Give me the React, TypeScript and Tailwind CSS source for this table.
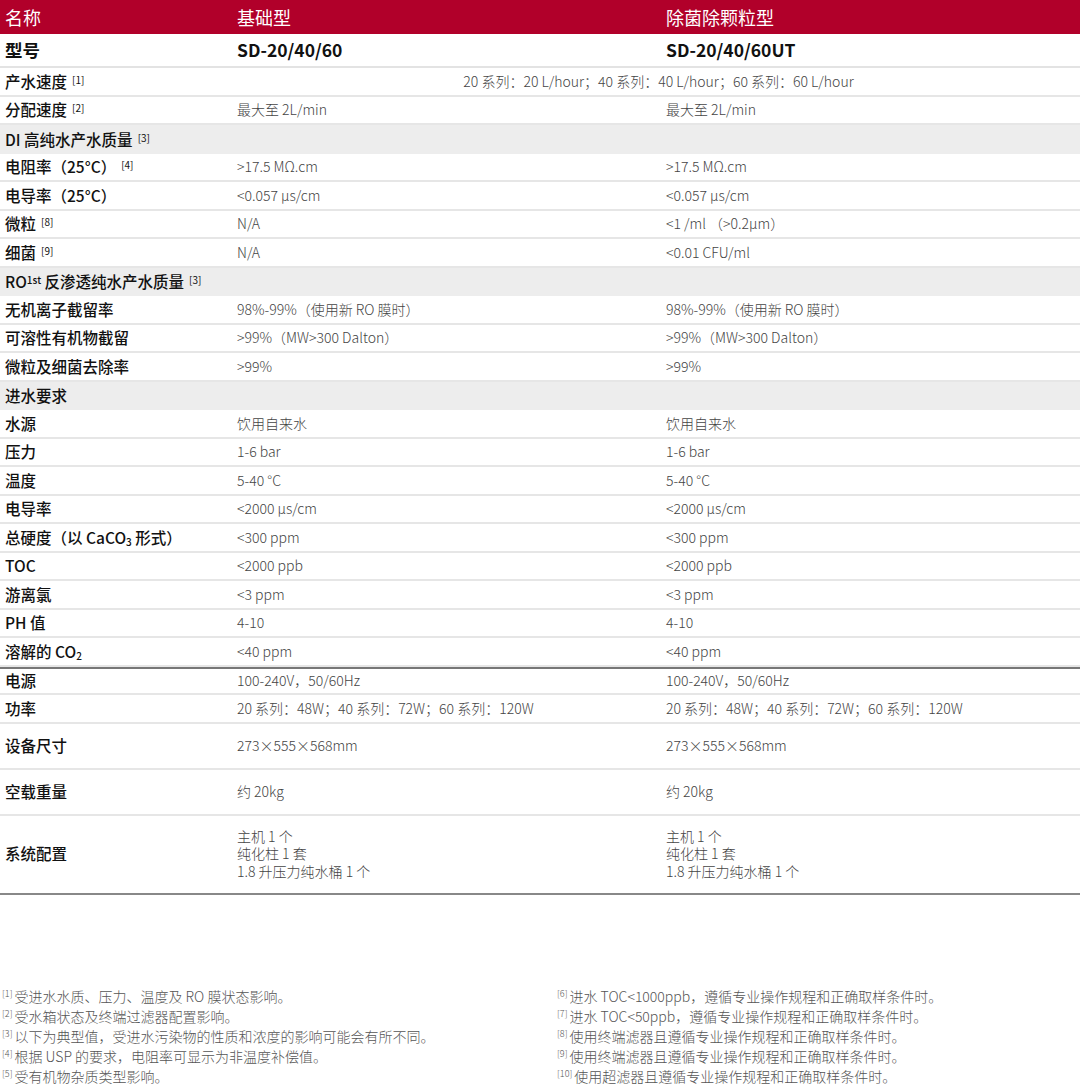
import React from 'react';

type Row = {
  label: React.ReactNode;
  a?: React.ReactNode;
  b?: React.ReactNode;
  span?: React.ReactNode;
  section?: boolean;
  h?: string;
  topDark?: boolean;
};

const Sup = ({ n }: { n: string }) => (
  <sup className="ml-[5px] text-[10px] font-normal relative -top-[4px]">[{n}]</sup>
);

const rows: Row[] = [
  {
    label: <>产水速度<Sup n="1" /></>,
    span: '20 系列：20 L/hour；40 系列：40 L/hour；60 系列：60 L/hour',
  },
  { label: <>分配速度<Sup n="2" /></>, a: '最大至 2L/min', b: '最大至 2L/min' },
  { label: <>DI 高纯水产水质量<Sup n="3" /></>, section: true },
  { label: <>电阻率（25°C）<Sup n="4" /></>, a: '>17.5 MΩ.cm', b: '>17.5 MΩ.cm' },
  { label: '电导率（25°C）', a: '<0.057 µs/cm', b: '<0.057 µs/cm' },
  { label: <>微粒<Sup n="8" /></>, a: 'N/A', b: '<1 /ml （>0.2µm）' },
  { label: <>细菌<Sup n="9" /></>, a: 'N/A', b: '<0.01 CFU/ml' },
  {
    label: (
      <>
        RO<sup className="text-[10px] relative -top-[4px]">1st</sup> 反渗透纯水产水质量<Sup n="3" />
      </>
    ),
    section: true,
  },
  { label: '无机离子截留率', a: '98%-99%（使用新 RO 膜时）', b: '98%-99%（使用新 RO 膜时）' },
  { label: '可溶性有机物截留', a: '>99%（MW>300 Dalton）', b: '>99%（MW>300 Dalton）' },
  { label: '微粒及细菌去除率', a: '>99%', b: '>99%' },
  { label: '进水要求', section: true },
  { label: '水源', a: '饮用自来水', b: '饮用自来水' },
  { label: '压力', a: '1-6 bar', b: '1-6 bar' },
  { label: '温度', a: '5-40 °C', b: '5-40 °C' },
  { label: '电导率', a: '<2000 µs/cm', b: '<2000 µs/cm' },
  {
    label: (
      <>
        总硬度（以 CaCO<sub className="text-[10px]">3</sub> 形式）
      </>
    ),
    a: '<300 ppm',
    b: '<300 ppm',
  },
  { label: 'TOC', a: '<2000 ppb', b: '<2000 ppb' },
  { label: '游离氯', a: '<3 ppm', b: '<3 ppm' },
  { label: 'PH 值', a: '4-10', b: '4-10' },
  {
    label: (
      <>
        溶解的 CO<sub className="text-[10px]">2</sub>
      </>
    ),
    a: '<40 ppm',
    b: '<40 ppm',
  },
  { label: '电源', a: '100-240V，50/60Hz', b: '100-240V，50/60Hz', topDark: true },
  {
    label: '功率',
    a: '20 系列：48W；40 系列：72W；60 系列：120W',
    b: '20 系列：48W；40 系列：72W；60 系列：120W',
  },
  { label: '设备尺寸', a: '273×555×568mm', b: '273×555×568mm', h: 'h-[46px]' },
  { label: '空载重量', a: '约 20kg', b: '约 20kg', h: 'h-[46px]' },
];

const config = (
  <div className="leading-[17.5px]">
    <div>主机 1 个</div>
    <div>纯化柱 1 套</div>
    <div>1.8 升压力纯水桶 1 个</div>
  </div>
);

const notesLeft = [
  ['1', '受进水水质、压力、温度及 RO 膜状态影响。'],
  ['2', '受水箱状态及终端过滤器配置影响。'],
  ['3', '以下为典型值，受进水污染物的性质和浓度的影响可能会有所不同。'],
  ['4', '根据 USP 的要求，电阻率可显示为非温度补偿值。'],
  ['5', '受有机物杂质类型影响。'],
];

const notesRight = [
  ['6', '进水 TOC<1000ppb，遵循专业操作规程和正确取样条件时。'],
  ['7', '进水 TOC<50ppb，遵循专业操作规程和正确取样条件时。'],
  ['8', '使用终端滤器且遵循专业操作规程和正确取样条件时。'],
  ['9', '使用终端滤器且遵循专业操作规程和正确取样条件时。'],
  ['10', '使用超滤器且遵循专业操作规程和正确取样条件时。'],
];

const Notes = ({ items }: { items: string[][] }) => (
  <div className="flex flex-col">
    {items.map(([n, t]) => (
      <div key={n} className="h-[20px] leading-[20px] text-[14px] text-[#555] font-light whitespace-nowrap">
        <span className="text-[9px] relative -top-[5px] mr-[2px]">[{n}]</span>
        {t}
      </div>
    ))}
  </div>
);

export default function App() {
  return (
    <div
      className="w-[1080px] h-[1085px] bg-white overflow-hidden"
      style={{ fontFamily: '"Noto Sans CJK SC", "Noto Sans", sans-serif' }}
    >
      {/* header */}
      <div className="grid grid-cols-[237px_429px_1fr] h-[34px] items-center bg-[#b1002a] text-white text-[18px]">
        <div className="pl-[5px]">名称</div>
        <div>基础型</div>
        <div>除菌除颗粒型</div>
      </div>

      {/* model */}
      <div className="grid grid-cols-[237px_429px_1fr] h-[34px] items-center border-b-2 border-[#e3e3e3] text-[17.5px] font-bold text-[#111]">
        <div className="pl-[5px]">型号</div>
        <div>SD-20/40/60</div>
        <div>SD-20/40/60UT</div>
      </div>

      {rows.map((r, i) => (
        <div
          key={i}
          className={`grid grid-cols-[237px_429px_1fr] items-center ${r.h ?? 'h-[28.5px]'} ${
            r.section ? 'bg-[#ededed]' : 'border-b-2 border-[#e6e6e6]'
          } ${r.topDark ? 'border-t-2 border-t-[#777]' : ''}`}
        >
          <div className="pl-[5px] text-[15.5px] font-medium text-[#111] whitespace-nowrap">{r.label}</div>
          {r.span ? (
            <div className="col-span-2 text-center text-[14px] text-[#444] font-light">{r.span}</div>
          ) : (
            <>
              <div className="text-[14px] text-[#444] font-light whitespace-nowrap">{r.a}</div>
              <div className="text-[14px] text-[#444] font-light whitespace-nowrap">{r.b}</div>
            </>
          )}
        </div>
      ))}

      <div className="grid grid-cols-[237px_429px_1fr] items-center h-[79px] border-b-2 border-[#888]">
        <div className="pl-[5px] text-[15.5px] font-medium text-[#111]">系统配置</div>
        <div className="text-[14px] text-[#444] font-light">{config}</div>
        <div className="text-[14px] text-[#444] font-light">{config}</div>
      </div>

      {/* footnotes */}
      <div className="grid grid-cols-[555px_1fr] mt-[91px] pl-[2px]">
        <Notes items={notesLeft} />
        <Notes items={notesRight} />
      </div>
    </div>
  );
}
